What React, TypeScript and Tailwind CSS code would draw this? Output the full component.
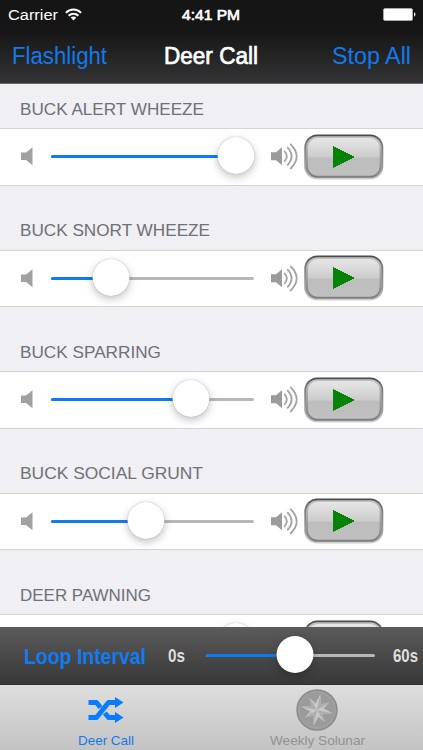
import clsx from "clsx";

interface Call {
  name: string;
  volume: number;
}

const calls: Call[] = [
  { name: "BUCK ALERT WHEEZE", volume: 185.5 },
  { name: "BUCK SNORT WHEEZE", volume: 60 },
  { name: "BUCK SPARRING", volume: 140.5 },
  { name: "BUCK SOCIAL GRUNT", volume: 95.5 },
  { name: "DEER PAWNING", volume: 185.5 },
];

const headerWidths = [184, 190, 141, 183, 131];

// Single line of text fitted to an exact width
function FitText({
  text,
  width,
  size,
  height,
  className,
  weight = "regular",
}: {
  text: string;
  width: number;
  size: number;
  height: number;
  className?: string;
  weight?: "regular" | "medium" | "bold";
}) {
  return (
    <svg width={width} height={height} className={clsx("shrink-0 overflow-visible", className)}>
      <text
        x={0}
        y={height}
        fontSize={size}
        fontWeight={weight === "bold" ? 700 : 400}
        textLength={width}
        lengthAdjust="spacingAndGlyphs"
        fill="currentColor"
        stroke="currentColor"
        strokeWidth={weight === "medium" ? 0.7 : 0}
      >
        {text}
      </text>
    </svg>
  );
}

function Slider({ value, className }: { value: number; className?: string }) {
  return (
    <div className={clsx("relative h-[3px] shrink-0 rounded-full bg-[#b7b7b7]", className)}>
      <div className="h-full rounded-full bg-[#0f7af5]" style={{ width: value }} />
      <div
        className="absolute -top-[18px] size-[37px] -translate-x-1/2 rounded-full bg-white shadow-[0_0_1px_rgba(0,0,0,0.35),0_3px_8px_rgba(0,0,0,0.25)]"
        style={{ left: value }}
      />
    </div>
  );
}

function SpeakerLow() {
  return (
    <svg width="13" height="19" viewBox="0 0 13 19" className="shrink-0">
      <path d="M0 5.5H5L11.5 0.3V18.2L5 13H0Z" fill="#a1a1a1" />
    </svg>
  );
}

function SpeakerHigh() {
  return (
    <svg width="28" height="27" viewBox="0 0 28 27" className="shrink-0">
      <path d="M0 9.2H5L11 4.2V22.2L5 17.2H0Z" fill="#9b9b9b" />
      <g fill="none" stroke="#a3a3a3" strokeWidth="1.8">
        <path d="M13.2 7.8Q18.6 13.3 13.2 18.8" />
        <path d="M16.2 4.2Q25 13.3 16.2 22.4" />
        <path d="M19.2 0.8Q32.2 13.3 19.2 26" />
      </g>
    </svg>
  );
}

function PlayButton() {
  return (
    <button aria-label="Play" className="block">
      <svg width="80" height="46" viewBox="0 0 80 46">
        <defs>
          <linearGradient id="rim" x1="0" y1="0" x2="0" y2="1">
            <stop offset="0" stopColor="#474747" />
            <stop offset="0.2" stopColor="#777777" />
            <stop offset="0.75" stopColor="#a2a2a2" />
            <stop offset="1" stopColor="#d2d2d2" />
          </linearGradient>
          <linearGradient id="bevel" x1="0" y1="0" x2="0" y2="1">
            <stop offset="0" stopColor="#c2c2c2" />
            <stop offset="0.5" stopColor="#a0a0a0" />
            <stop offset="1" stopColor="#7d7d7d" />
          </linearGradient>
          <linearGradient id="face" x1="0" y1="0" x2="0" y2="1">
            <stop offset="0" stopColor="#e6e6e6" />
            <stop offset="0.5" stopColor="#cccccc" />
            <stop offset="0.54" stopColor="#bdbdbd" />
            <stop offset="1" stopColor="#c0c0c0" />
          </linearGradient>
        </defs>
        <rect x="0.3" y="0.5" width="79" height="45" rx="13" fill="url(#rim)" />
        <rect x="2" y="2.2" width="75.6" height="41.6" rx="11.5" fill="url(#bevel)" />
        <rect x="4" y="4" width="71.6" height="37.8" rx="9.5" fill="url(#face)" />
        <path d="M29 12L51 23L29 34Z" fill="#068206" shapeRendering="crispEdges" />
      </svg>
    </button>
  );
}

function CallSection({ call, index }: { call: Call; index: number }) {
  return (
    <section>
      <div
        className={clsx("flex items-end pl-5", index === 0 ? "h-[44px] pb-[13px]" : "h-[64px] pb-[13.5px]")}
      >
        <FitText
          text={call.name}
          width={headerWidths[index]}
          size={17}
          height={12}
          className="text-[#707075]"
        />
      </div>
      <div className="flex h-[57.5px] items-center border-y border-[#d4d3d9] bg-white pl-[21px]">
        <SpeakerLow />
        <Slider value={call.volume} className="ml-[16.5px] w-[203.5px]" />
        <span className="ml-[17px]">
          <SpeakerHigh />
        </span>
        <span className="ml-[4.5px]">
          <PlayButton />
        </span>
      </div>
    </section>
  );
}

function ShuffleIcon() {
  return (
    <svg width="36" height="26" viewBox="0 0 36 26">
      <g fill="none" stroke="#087cff" strokeWidth="5" strokeLinejoin="round">
        <path d="M0.5 5.5H8.5L12.5 10.5" />
        <path d="M16.8 16L20.5 20.5H28" />
        <path d="M0.5 20.5H8.5L20.5 5.5H28" />
      </g>
      <path d="M27 0L35.5 5.5L27 11ZM27 15L35.5 20.5L27 26Z" fill="#087cff" />
    </svg>
  );
}

function CompassIcon() {
  return (
    <svg width="42" height="42" viewBox="0 0 42 42">
      <circle cx="21" cy="21" r="20" fill="#9b9b9b" stroke="#8b8b8b" strokeWidth="1.4" />
      <circle cx="21" cy="21" r="18" fill="none" stroke="#a6a6a6" strokeWidth="0.8" />
      <g transform="rotate(12 21 21)">
        <path d="M21 21L10.5 10.5L19 15ZM21 21L31.5 10.5L27 19ZM21 21L31.5 31.5L23 27ZM21 21L10.5 31.5L15 23Z" fill="#c4c4c4" />
        <path d="M21 21L10.5 10.5L15 19ZM21 21L31.5 10.5L23 15ZM21 21L31.5 31.5L27 23ZM21 21L10.5 31.5L19 27Z" fill="#b0b0b0" />
        <path d="M21 5L24.5 17.5L37 21L24.5 24.5L21 37L17.5 24.5L5 21L17.5 17.5Z" fill="#c9c9c9" />
        <path d="M21 5V21L24.5 17.5ZM37 21H21L24.5 24.5ZM21 37V21L17.5 24.5ZM5 21H21L17.5 17.5Z" fill="#aeaeae" />
      </g>
    </svg>
  );
}

function StatusBar() {
  return (
    <div className="flex h-7 items-center pl-2 text-white">
      <FitText text="Carrier" width={50} size={15.5} height={11} />
      <svg width="17" height="13" viewBox="0 0 17 13" className="ml-[7px]">
        <g fill="none" stroke="white" strokeWidth="2">
          <path d="M1 4.8C5 0.4 12 0.4 16 4.8" />
          <path d="M3.7 7.8C6.4 4.9 10.6 4.9 13.3 7.8" />
        </g>
        <path d="M5.7 9.6Q8.5 7.2 11.3 9.6L8.5 12.5Z" fill="white" />
      </svg>
      <FitText text="4:41 PM" width={58} size={15.5} height={11} weight="medium" className="ml-[100px]" />
      <svg width="33" height="13" viewBox="0 0 33 13" className="ml-[143px]">
        <rect x="0.5" y="0.5" width="29" height="12" rx="1.5" fill="white" stroke="#a8a8a8" />
        <path d="M31 4.3Q34 6.5 31 8.7Z" fill="white" />
      </svg>
    </div>
  );
}

export default function App() {
  return (
    <div className="flex h-[750px] w-[423px] flex-col overflow-hidden bg-[#efeff4] font-['Liberation_Sans',sans-serif]">
      <header className="h-[84px] shrink-0 border-b border-[#65656a] bg-linear-to-b from-[#151515] from-35% to-[#343436]">
        <StatusBar />
        <div className="flex h-[55px] items-center text-[#1479ed]">
          <FitText text="Flashlight" width={95} size={23} height={17} className="ml-3" />
          <FitText
            text="Deer Call"
            width={94}
            size={23}
            height={17}
            weight="medium"
            className="ml-[57px] text-white"
          />
          <FitText text="Stop All" width={79} size={23} height={17} className="ml-[74px]" />
        </div>
      </header>

      <main className="min-h-0 flex-1 overflow-hidden">
        {calls.map((call, index) => (
          <CallSection key={call.name} call={call} index={index} />
        ))}
      </main>

      <div className="relative flex h-[58px] shrink-0 items-center border-b border-[#303030] bg-linear-to-b from-[#5b5b5b] to-[#383838]">
        <FitText
          text="Loop Interval"
          width={122}
          size={22}
          height={17}
          weight="bold"
          className="ml-6 text-[#117bf2]"
        />
        <FitText text="0s" width={17} size={18.5} height={13} weight="bold" className="ml-[22px] text-[#dedede]" />
        <Slider value={89} className="ml-[21px] w-[169px]" />
        <FitText text="60s" width={25} size={18.5} height={13} weight="bold" className="ml-[18px] text-[#dedede]" />
      </div>

      <nav className="relative flex h-[65px] shrink-0 bg-linear-to-b from-[#dedede] to-[#c3c3c3]">
        <div className="flex flex-1 flex-col items-center justify-between pt-3 pb-[5px] text-[#1479ed]">
          <ShuffleIcon />
          <FitText text="Deer Call" width={56} size={13.5} height={10} />
        </div>
        <div className="flex flex-1 flex-col items-center justify-between pt-1 pb-[5px] text-[#929292]">
          <CompassIcon />
          <FitText text="Weekly Solunar" width={95} size={13.5} height={10} />
        </div>
      </nav>
    </div>
  );
}
